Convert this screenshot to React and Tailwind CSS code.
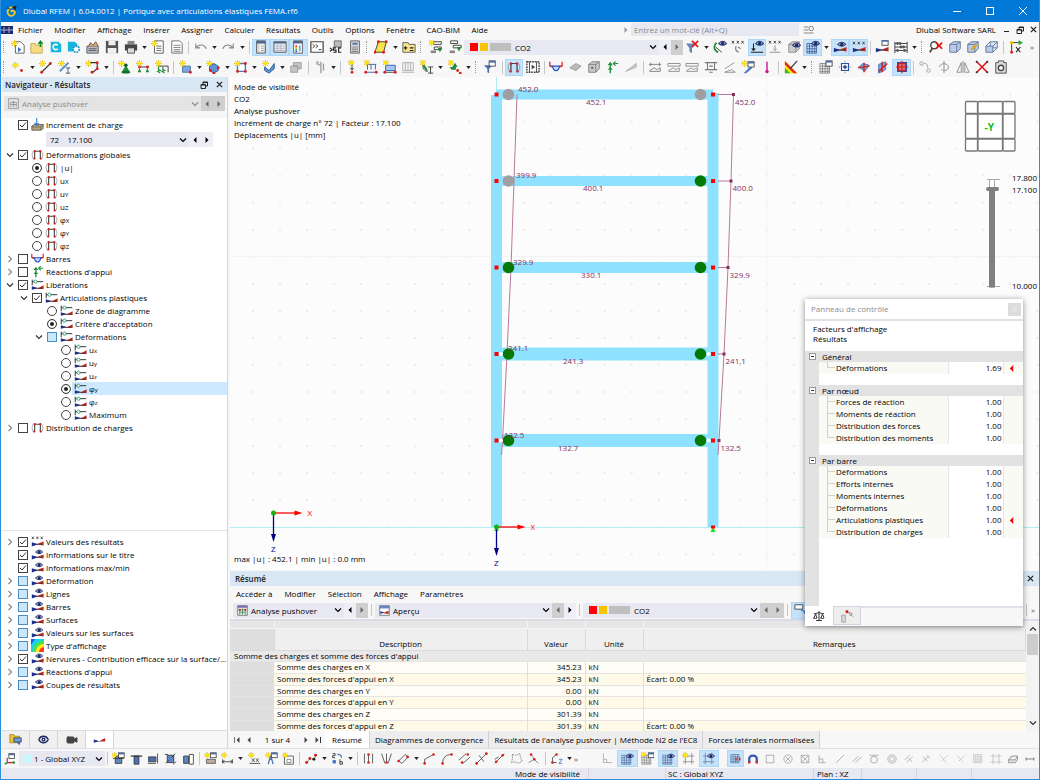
import { useState } from 'react';
import clsx from 'clsx';
import { LuEye, LuScale, LuVideo } from 'react-icons/lu';

/* ---------- icon fragments ---------- */

const Star = ({ x = 4, y = 4 }) => (
  <g transform={`translate(${x} ${y})`}>
    <path d="M0-4v8M-4 0h8M-2.8-2.8l5.6 5.6M2.8-2.8l-5.6 5.6" stroke="#c9a400" strokeWidth=".8" />
    <circle r="2.4" fill="#ffe40a" />
  </g>
);

const Dots = ({ at, r = 1.6, fill = '#d81e1e' }) => at.map(([x, y]) => <circle key={`${x}-${y}`} cx={x} cy={y} r={r} fill={fill} />);

const Eye = ({ x = 11, y = 4 }) => (
  <g transform={`translate(${x} ${y})`}>
    <path d="M-4.5 0Q0-5 4.5 0 0 4-4.5 0z" fill="#c8cfe6" stroke="#2c3c78" strokeWidth="1.2" />
    <circle r="2" fill="#1d2a63" />
  </g>
);

const Wedge = () => (
  <g>
    <path d="M1 14V9l8 2.5z" fill="#1c2f9a" />
    <path d="M15.500 8v5l-9-1.500z" fill="#b9281e" />
    <path d="M3 11.500h11" stroke="#333" strokeWidth=".8" />
  </g>
);

const Crosses = ({ y = 2 }) => (
  <path
    d={`M1 ${y}l2.4 3M3.4 ${y}l-2.4 3M6.6 ${y}l2.4 3M9 ${y}l-2.4 3M12 ${y}l2.4 3M14.4 ${y}l-2.4 3`}
    stroke="#333"
    strokeWidth="1"
  />
);

const Grid = ({ stroke = '#666', x = 1, y = 3 }) => (
  <path
    d={`M${x} ${y}h11v11h-11zM${x} ${y + 3}h11M${x} ${y + 6}h11M${x} ${y + 9}h11M${x + 3} ${y}v11M${x + 6} ${y}v11M${x + 9} ${y}v11`}
    fill="none"
    stroke={stroke}
    strokeWidth=".9"
  />
);

const Win = ({ fill = '#4e6fae', x = 8, y = 1 }) => (
  <g>
    <rect x={x} y={y} width="7" height="6" fill="#fff" stroke="#444" />
    <rect x={x} y={y} width="7" height="2" fill={fill} />
  </g>
);

const Cube = ({ fill = '#b9cdea', stroke = '#5b6f92' }) => (
  <path d="M2 5l4-3h8v8l-4 4H2zM2 5h8v9M10 5l4-3" fill={fill} stroke={stroke} />
);

const glyphs = {
  /* file */
  new: <><path d="M5 2h6l4 4v9H5z" fill="#fff" stroke="#555" /><path d="M8 8l4 3-4 3z" fill="#4477bb" /><Star /></>,
  open: <><path d="M1 4h5l1 2h7v9H1z" fill="#f4dd87" stroke="#c7a84a" /><path d="M12 8V2M9.5 4.500L12 1.500l2.500 3" stroke="#188a2a" strokeWidth="1.8" fill="none" /></>,
  cloud: <><path d="M2 2h9l3 3v9H2z" fill="#16b6dd" /><path d="M10 6a3 3 0 1 0 0 4" fill="none" stroke="#fff" strokeWidth="1.8" /></>,
  cloudGear: <><path d="M1 2h8l3 3v8H1z" fill="#16b6dd" /><circle cx="10.5" cy="10.5" r="3.5" fill="#fff" stroke="#2196c9" strokeWidth="2" strokeDasharray="2 1" /></>,
  box: <><path d="M1 7h13v8H1z" fill="#b5bcc8" stroke="#555" /><path d="M3 7l2-4 3 3 3-4 3 5" fill="#d8a878" stroke="#6a4a3a" /><path d="M3 10h9M3 12h9" stroke="#555" /></>,
  save: <><path d="M1 1h14v14H1z" fill="#555" /><path d="M4 1h8v5H4zM3 9h10v6H3z" fill="#eee" /></>,
  print: <><path d="M4 1h8v4H4z" fill="#888" /><path d="M1 5h14v7H1z" fill="#444" /><path d="M4 9h8v6H4z" fill="#ddd" stroke="#444" /></>,
  pageNew: <><path d="M4 1h10v14H4z" fill="#fff" stroke="#555" /><path d="M6 7h6M6 9.500h6M6 12h6" stroke="#666" /><Star /></>,
  page: <><path d="M2 1h9l3 3v11H2z" fill="#fff" stroke="#666" /><path d="M4 6h8M4 8.500h8M4 11h8M4 13h8" stroke="#777" /></>,
  undo: <path d="M2 4v5h5M2 9c4-5 10-4 12 1" fill="none" stroke="#888" strokeWidth="1.3" />,
  redo: <path d="M14 4v5H9M14 9C10 4 4 5 2 10" fill="none" stroke="#888" strokeWidth="1.3" />,
  navPane: <><path d="M3 1h10v14H3z" fill="#ddd" stroke="#555" /><path d="M3 1h10v3H3z" fill="#51668f" /><path d="M7 5h4v8H7z" fill="#fff" /><path d="M8 7h3M8 9.500h3M8 12h3" stroke="#888" /></>,
  tablePane: <><path d="M1 2h14v12H1z" fill="#e6e9f0" stroke="#555" /><path d="M1 2h14v2H1z" fill="#51668f" /><path d="M1 7h14M1 9.500h14M1 12h14M5 4v10M9 4v10" stroke="#aab" strokeWidth=".7" /></>,
  panel: <><path d="M3 1h10v14H3z" fill="#fff" stroke="#555" /><path d="M3 1h10v3H3z" fill="#51668f" /><path d="M5 6h2v2H5z" fill="#e33" /><path d="M5 8h2v2H5z" fill="#fb0" /><path d="M5 10h2v2H5z" fill="#3b3" /><path d="M5 12h2v2H5z" fill="#25e" /><path d="M9 6h2v7H9z" fill="#7aa7e8" /></>,
  console: <><path d="M1 2h14v12H1z" fill="#fff" stroke="#444" strokeWidth="1.4" /><path d="M3 5l2.500 2L3 9M6.500 5L9 7 6.500 9M10 11h3" fill="none" stroke="#222" /></>,
  script: <><path d="M6 1h8v7H6z" fill="#bbb" stroke="#666" /><path d="M1 9l2.500 2L1 13" fill="none" stroke="#222" strokeWidth="1.3" /><path d="M8 9H5v2.500h3V14H5M14 9h-3v5h3" fill="none" stroke="#222" strokeWidth="1.3" /></>,
  calc: <><path d="M3 1h10v14H3z" fill="#ddd" stroke="#555" /><path d="M5 3h6v2.500H5z" fill="#5b77ad" /><path d="M5 8h6M5 10.500h6M5 13h6" stroke="#555" strokeDasharray="1.5 .8" strokeWidth="1.4" /></>,
  surfY: <><path d="M5 2h9l-3 12H1z" fill="#f6e34c" stroke="#333" /><Dots at={[[5, 2], [14, 2], [11, 14], [1, 14]]} /></>,
  calcY: <><path d="M1 3h6l1 2h7v9H1z" fill="#f6e58d" stroke="#555" /><path d="M4 7v4M2 9h4M9 9h4M9 12h4" stroke="#222" strokeWidth="1.3" /></>,
  loadNew: <><path d="M5 2h9v3H5zM6 8h8v3H6z" fill="#fff" stroke="#333" /><path d="M10 9h5l-2.500 5z" fill="#1b8a2b" /><path d="M2 12h6v3H2z" fill="#888" /><Star x={3} y={3} /></>,
  loadEdit: <><path d="M3 1h8v3H3zM6 6h9v3H6z" fill="#fff" stroke="#333" /><path d="M10 8h5l-2.500 5z" fill="#1b8a2b" /><path d="M2 12h6v3H2z" fill="#888" /></>,
  filterX: <><path d="M1 4h11l-4 5v6l-3-2V9z" fill="#6b86bd" /><path d="M8 1l7 7M15 1L8 8" stroke="#e01515" strokeWidth="2" /></>,
  greenEye: <><path d="M4 3c-4 4-3 9 2 11" fill="none" stroke="#238a3c" strokeWidth="2" /><path d="M3 8l7 6" stroke="#333" /><Eye /></>,
  xxxGray: <><Crosses y={1} /><path d="M6 7c-2 3 0 6 3 7M8 8l3 2" fill="none" stroke="#888" strokeWidth="1.5" /></>,
  loadEye: <><path d="M4 4v8M2 9.500L4 12l2-2.500M1 14h14" fill="none" stroke="#222" strokeWidth="1.2" /><Eye /></>,
  xxxLoad: <><Crosses y={1} /><path d="M8 6v6M6 10l2 2 2-2M2 14h12" fill="none" stroke="#888" /></>,
  cubeEye: <><Cube fill="#ccc" stroke="#888" /><Eye y={6} /></>,
  gridEye: <><Grid stroke="#3d5c94" y={4} /><Eye x={11} y={4} /></>,
  wedgeEye: <><Wedge /><Eye x={10} y={5} /></>,
  wedgeXxx: <><Wedge /><Crosses y={2} /></>,
  wedge: <><path d="M1 12V8l7 2z" fill="#1c2f9a" /><path d="M15 6v4.500H7z" fill="#b9281e" /></>,
  wedgeWin: <><Wedge /><Win x={8} y={0} /></>,
  abacus: <><path d="M1 2v13M15 2v13M1 4h14M1 8h14M1 12h14" stroke="#333" /><Dots at={[[4, 4], [7, 4], [11, 8], [8, 8], [4, 12], [12, 12]]} fill="#555" /></>,
  zoomX: <><circle cx="6" cy="6" r="4" fill="none" stroke="#444" strokeWidth="1.5" /><path d="M4 9l-3 5" stroke="#444" strokeWidth="2" /><path d="M8 3l7 7M15 3l-7 7" stroke="#e01515" strokeWidth="2" /></>,
  cube: <Cube />,
  cubePen: <><Cube /><path d="M6 11l6-6" stroke="#e0a020" strokeWidth="2.5" /></>,
  cubes: <><path d="M6 2h8v7H6z" fill="#dde6f5" stroke="#5b6f92" /><path d="M1 7h8v7H1zM1 7l5-5M9 7l5-5M9 14l5-5" fill="#b9cdea" stroke="#5b6f92" /></>,
  axes: <><path d="M3 14V3h10" fill="none" stroke="#222" /><path d="M11 0l5 3-5 3z" fill="#1fae2e" /><path d="M8 8l5 6M13 8l-5 6" stroke="#222" strokeWidth="1.3" /><Dots at={[[3, 3]]} fill="#e8c000" r={2} /><Dots at={[[3, 14]]} /></>,
  /* model */
  node: <><Star x={5} y={6} /><Dots at={[[12, 12]]} /></>,
  line: <><path d="M3 14L13 4" stroke="#333" strokeWidth="1.3" /><Dots at={[[3, 14], [13, 4]]} /><Star /></>,
  member: <><path d="M2 13L12 3" stroke="#5a86c8" strokeWidth="2" /><path d="M9 9h5M11.500 9v6M9 15h5" stroke="#678" strokeWidth="1.3" /><Star /></>,
  poly: <><path d="M6 3h8v7l-5 4" fill="none" stroke="#333" strokeWidth="1.3" /><Dots at={[[14, 3], [14, 10], [8, 14]]} /><Star /></>,
  cone: <><path d="M9 6l5 8H4z" fill="#1e8c3a" /><ellipse cx="9" cy="14" rx="5" ry="1.5" fill="#146b2a" /><Dots at={[[9, 6]]} fill="#145a24" r={2} /><Star /></>,
  supports: <><path d="M3 8h12" stroke="#333" /><path d="M4 9l2 5H2zM13 9l2 5h-4z" fill="#1e8c3a" /><Dots at={[[4, 8], [13, 8]]} /><Star /></>,
  springs: <><path d="M3 7h12v7" fill="none" stroke="#333" /><path d="M4 8v3l2 1-3 1 3 2M9 8v3l2 1-3 1 3 2" fill="none" stroke="#1e8c3a" strokeWidth="1.3" /><Star /></>,
  surface: <><path d="M4 7h9v7H4z" fill="#7ea6dc" stroke="#4a6fa5" /><Dots at={[[13, 14]]} /><Star /></>,
  solid: <><path d="M4 7l5-3 5 3v5l-5 3-5-3z" fill="#5f93d6" stroke="#2c558f" /><Dots at={[[14, 9], [9, 15], [5, 12]]} /><Star /></>,
  opening: <><path d="M4 4h9v9H4z" fill="#fff" stroke="#4a77b8" strokeWidth="1.6" /><Dots at={[[13, 4], [13, 13], [4, 13]]} /><Star /></>,
  prism: <><path d="M3 8l5 4 6-8v6l-6 5-5-3z" fill="#5f93d6" stroke="#2c558f" /><Star /></>,
  blocks: <path d="M2 7h8v7H2zM5 3h9v7h-4V7H5z" fill="#c4c4c4" stroke="#999" />,
  grayCol: <><path d="M9 2v13M12 4v8M4 4l4 2" stroke="#999" strokeWidth="1.5" /><circle cx="5" cy="3" r="2" fill="#bbb" /></>,
  pinLoad: <><path d="M8 4v7M6 9l2 2.500L10 9" stroke="#333" fill="none" /><Dots at={[[8, 14]]} /><Star x={7} y={3} /></>,
  lineLoad: <><path d="M3 5h11M4 5v6M8 5v6M13 5v6M2 14h13" stroke="#2f5da8" fill="none" /><Dots at={[[2, 14], [14, 14]]} /><Star x={3} y={3} /></>,
  surfLoad: <><path d="M3 6h11v6H3z" fill="#a9c6ee" stroke="#2f5da8" /><path d="M2 14h13" stroke="#333" /><Dots at={[[2, 14], [14, 14]]} /><Star x={3} y={3} /></>,
  grayLoad: <path d="M2 3h12v9H2zM5 3v9M8 3v9M11 3v9M1 14h14" fill="none" stroke="#aaa" />,
  nodeI: <><path d="M3 4c0 6 2 9 6 9M9 8h6M12 8v7M9 15h6" fill="none" stroke="#333" /><path d="M4 6l4 6" stroke="#1e8c3a" strokeWidth="2.5" /><Star x={3} y={3} /></>,
  greenArrow: <><path d="M2 8h3l3-5 3 5h-2v3H4z" fill="#1e8c3a" /><Dots at={[[11, 12], [14, 15]]} /><Star x={3} y={3} /></>,
  filterWin: <><path d="M1 6h10l-4 4v5l-2-1v-4z" fill="#4b6fb3" /><Win x={7} y={1} /></>,
  frame: <><path d="M4.500 13V4h7v9" fill="none" stroke="#444" strokeWidth="1.4" /><path d="M2.500 4Q0 8 2.500 13M13.500 4q2.500 4 0 9" fill="none" stroke="#888" strokeWidth=".8" /><Dots at={[[4.5, 4], [11.5, 4], [4, 13], [12, 13]]} fill="#c42626" r={1.4} /></>,
  film: <><path d="M1 2h14v12H1z" fill="none" stroke="#444" strokeWidth="1.6" strokeDasharray="2 1" /><path d="M4 2v12M12 2v12" stroke="#444" /><path d="M6.500 5.500l4 2.500-4 2.500z" fill="#444" /></>,
  moment: <><path d="M1 2v5l3 1M15 2v5l-3 1M1 7h3M12 7h3" fill="none" stroke="#d02020" strokeWidth="1.4" /><path d="M4 7c1 7 7 7 8 0z" fill="#c8d8f8" stroke="#2a4fc0" strokeWidth="1.3" /></>,
  plate: <path d="M2 9l7-5 6 3-6 5z" fill="#bbb" stroke="#999" />,
  cubeGray: <><Cube fill="#ccc" stroke="#777" /><Dots at={[[6, 9]]} fill="#777" /></>,
  reaction: <><path d="M6 15v-4M6 9V5" stroke="#1e8c3a" strokeWidth="1.6" /><path d="M3 6l3-4 3 4zM3 11l3-3 3 3z" fill="#1e8c3a" /><path d="M15 4h-4M12 1.500L9.500 4 12 6.500" fill="none" stroke="#1e8c3a" strokeWidth="1.4" /></>,
  wing: <path d="M2 13L14 4v4z" fill="#ccc" stroke="#aaa" />,
  sec1: <path d="M1 5h14M3 3v4M13 3v4M2 12l5-3 3 2 4-2v4H2z" fill="none" stroke="#777" />,
  sec2: <path d="M1 4h14v3H1zM2 12l5-3 3 2 4-2v4H2z" fill="none" stroke="#888" />,
  sec3: <path d="M1 3h14M4 3v8M12 3v8M1 11h14M6 14h4M6 7h4" fill="none" stroke="#777" strokeWidth="1.2" />,
  sec4: <path d="M2 10L13 3M2 14h12l-4-3z" fill="none" stroke="#888" />,
  resWin: <><path d="M3 15l8-8 2 2-7 6z" fill="#4b78c8" /><Win x={8} y={2} /><Star x={4} y={4} /></>,
  pin: <><path d="M8 2v10" stroke="#d0149a" strokeWidth="1.6" /><Dots at={[[8, 13]]} fill="#d0149a" r={2} /></>,
  rainbow: <><path d="M1 1v14h14z" fill="#ffe100" /><path d="M1 1l14 14h-4L1 5z" fill="#e02a1a" /><path d="M1 9l6 6H1z" fill="#2ab83a" /><path d="M15 1L7 10" stroke="#444" strokeWidth="1.5" /></>,
  gridWin: <><Grid stroke="#777" y={4} /><Win x={8} y={1} /></>,
  snap: <><path d="M8 1v14M1 8h14" stroke="#777" strokeDasharray="1.5 1" /><path d="M4 4h8v8H4z" fill="none" stroke="#2a4fa0" strokeWidth="1.3" /><Dots at={[[8, 8]]} fill="#2a4fa0" r={2} /></>,
  planeA: <><path d="M2 8l5-4 7 2-5 7z" fill="#7da5de" stroke="#4b6fb3" /><path d="M1 9l13-2M8 3v11" stroke="#d02020" strokeWidth="1.6" /></>,
  planeB: <><path d="M3 5l8-3v9l-8 4z" fill="#7da5de" stroke="#4b6fb3" /><path d="M3 13L13 4M7 2v12" stroke="#d02020" strokeWidth="1.6" /></>,
  planeC: <><path d="M3 3h10v10H3z" fill="#d87080" stroke="#2a4fa0" strokeWidth="1.4" /><path d="M1 8h14M8 1v14M4 4h8v8H4z" fill="none" stroke="#d02020" strokeWidth="1.4" /></>,
  dupl: <><circle cx="4" cy="4" r="2" fill="none" stroke="#999" /><circle cx="12" cy="12" r="2" fill="none" stroke="#999" /><path d="M7 4c4 0 4 2 4 5" fill="none" stroke="#999" /></>,
  rot: <path d="M8 1v14M3 8c0-5 10-5 10 0s-5 4-8 3" fill="none" stroke="#888" />,
  mirror: <path d="M8 1v14M6 3v11H1zM10 3v11h5z" fill="none" stroke="#888" />,
  cross: <><path d="M2 2l12 12M14 2L2 14" stroke="#e01515" strokeWidth="1.800" /><Dots at={[[2, 2], [14, 2], [2, 14], [14, 14]]} fill="#333" r={1.2} /></>,
  camera: <><path d="M2 3h3V1h6v2h3v12H2z" fill="#ddd" stroke="#444" /><circle cx="8" cy="9" r="3" fill="#fff" stroke="#444" strokeWidth="1.5" /></>,
  /* tree */
  hinge: <><path d="M1.500 2v7M1.500 4.500H15" stroke="#333" strokeWidth="1.2" /><circle cx="5.5" cy="4.5" r="2" fill="#e5fff5" stroke="#2a9070" /><path d="M1 14.500V10l8 2.500z" fill="#1c2f9a" /><path d="M15.500 9v4.500H7z" fill="#b9281e" /><path d="M2 12.500h12" stroke="#333" strokeWidth=".8" /></>,
  increment: <><path d="M1 10l3-2h11v5l-3 2H1z" fill="#b7a47a" stroke="#555" /><path d="M1 11h11v4M12 11l3-3" fill="none" stroke="#555" strokeWidth=".8" /><path d="M7 0v8M4.500 6L7 9l2.500-3" fill="none" stroke="#2f78c8" strokeWidth="1.3" /></>,
  pushover: <><path d="M1 1h14v14H1z" fill="#ececec" stroke="#777" /><path d="M4 13V6h8v7M4 9.500h8M8 4v9" fill="none" stroke="#777" /></>,
  pushoverC: <><path d="M1 1h14v14H1z" fill="#e8efe2" stroke="#555" /><path d="M1 1h14v3H1z" fill="#7a6fb0" /><path d="M4 14V7h8v7M4 10.500h8M8 5v9" fill="none" stroke="#2a7a4a" /><Dots at={[[4, 7], [12, 7]]} /></>,
  overview: <><path d="M1 1h14v14H1z" fill="#fff" stroke="#555" /><path d="M1 1h14v4H1z" fill="#6a86bd" /><path d="M2 13V9l6 2z" fill="#1c2f9a" /><path d="M14 8v5l-8-1z" fill="#b9281e" /></>,
  contour: <><path d="M0 0h16v16H0z" fill="#19d3e8" /><path d="M2 16A14 14 0 0 1 16 2v14z" fill="#4be04b" /><path d="M6 16A10 10 0 0 1 16 6v10z" fill="#ffe81a" /><path d="M10 16a6 6 0 0 1 6-6v6z" fill="#ff3a1a" /><path d="M0 0h5L0 7z" fill="#2257e8" /></>,
  modelTab: <><path d="M1 2h5l1 2h6v8H1z" fill="#f2c230" stroke="#a8841c" /><path d="M6 6h9v5H6z" fill="#6f9de0" stroke="#345" /><path d="M9 11l4 4 1-4z" fill="#3b6cc0" /></>,
  magnifierList: <><path d="M1 4h6M1 8h6M1 12h13" stroke="#777" strokeWidth="1.2" /><circle cx="11" cy="6" r="3" fill="none" stroke="#777" strokeWidth="1.2" /></>,
  /* bottom bar */
  cs: <><path d="M4 13V7M4 13h7" stroke="#d02020" strokeWidth="1.4" /><path d="M4 13l-3 2" stroke="#1e8c3a" strokeWidth="2" /><Win x={6} y={2} /><Dots at={[[12, 13]]} fill="#1e8c3a" /></>,
  viewA: <><path d="M4 5h8v9H4z" fill="#5d84c4" stroke="#333" /><path d="M1 8h14" stroke="#333" /><Win x={8} y={1} /><Star x={3} y={4} /></>,
  viewB: <><path d="M5 5h6v10H5z" fill="#4b6fb3" stroke="#333" /><path d="M1 5h14" stroke="#333" strokeWidth="1.5" /></>,
  viewC: <><path d="M2 6h9v6H2z" fill="#4b6fb3" stroke="#333" /><path d="M13 2v12M1 14h10" stroke="#333" /></>,
  viewD: <><path d="M4 4h8v9H4z" fill="#5d84c4" stroke="#333" /><path d="M1 3h4M15 12l-4 3M2 14l4-4M10 6l4-4" stroke="#333" /></>,
  viewE: <><path d="M2 5h6v9H2z" fill="#5d84c4" stroke="#333" /><path d="M9 3h5v12H9z" fill="#fff" stroke="#333" /></>,
  secNew: <><path d="M3 9h11v5H3z" fill="#b9b09a" stroke="#555" /><Win x={8} y={1} /><Star /></>,
  dimNew: <><path d="M2 9v5M14 9v5M2 12h12M4 10l-2 2 2 2M12 10l2 2-2 2" fill="none" stroke="#333" /><Star /></>,
  xxNew: <><path d="M5 8l3 4M8 8l-3 4M10 8l3 4M13 8l-3 4M2 14h13" stroke="#333" fill="none" /><Star /></>,
  towerNew: <><path d="M7 4l-3 11M7 4l3 11M5 9h4" fill="none" stroke="#4b6fb3" strokeWidth="1.5" /><Win x={8} y={1} /><Star /></>,
  boxNew: <><path d="M3 5h11v10H3z" fill="#fff" stroke="#444" /><path d="M6 9h5v4H6z" fill="none" stroke="#777" /><Star /></>,
  pathDots: <><path d="M2 13l4-5 5 1 3-6" fill="none" stroke="#333" strokeDasharray="2 1" /><Dots at={[[2, 13], [6, 8], [13, 4]]} r={1.8} /><Dots at={[[11, 9]]} fill="#222" r={1.8} /></>,
  renum: <><path d="M2 2h3v2.500H2V7h3M11 9v6h3v-3h-3" fill="none" stroke="#222" /><path d="M2 10h4v4H2z" fill="#3b72c8" /><path d="M8 3c4 0 5 2 5 4" fill="none" stroke="#3b72c8" strokeWidth="1.4" /></>,
  colA: <><path d="M3 2v12M13 2v12M8 3v10" stroke="#444" /><Dots at={[[8, 3], [8, 13]]} /></>,
  colB: <><path d="M2 2l4 12M14 2l-4 12M8 2v11" stroke="#444" /><Dots at={[[8, 13]]} /></>,
  rectD: <><path d="M2 11l8-8 4 3-8 8z" fill="none" stroke="#444" /><Dots at={[[2, 11], [13, 6]]} /></>,
  lineD: <><path d="M2 14V9l11-6" fill="none" stroke="#444" /><Dots at={[[2, 14], [13, 3]]} /></>,
  arcD: <><path d="M2 14C2 7 6 3 13 3" fill="none" stroke="#444" /><Dots at={[[2, 14], [13, 3]]} /></>,
  parD: <><path d="M1 10l9-8M6 14l9-8" stroke="#444" /><Dots at={[[5, 13], [12, 3]]} /></>,
  trimD: <><path d="M2 14L14 2M5 4l6 8" stroke="#444" /><Dots at={[[2, 14], [14, 2]]} /></>,
  joinD: <><path d="M2 14L14 2M2 9l5-3" stroke="#444" /><Dots at={[[4, 12], [12, 4]]} /></>,
  gearD: <path d="M3 3l4 1 5-2 1 5 2 4-5 3-4-2-4 1 1-5z" fill="none" stroke="#777" strokeDasharray="2 1" />,
  angleD: <><path d="M2 13l7-4L5 3M9 9l5 5" fill="none" stroke="#777" /><Dots at={[[5, 3], [9, 9]]} /></>,
  pentaD: <><path d="M8 3L3 7v6h5" fill="none" stroke="#444" /><path d="M11 9h4l-4 5h4" fill="none" stroke="#3b72c8" /><Dots at={[[8, 3], [3, 13]]} /></>,
  corner: <path d="M3 2v11h11M3 9h4v4" fill="none" stroke="#aaa" />,
  gridOn: <><Grid stroke="#54729f" y={4} /><Eye x={11} y={5} /></>,
  gridNew: <><Grid stroke="#888" y={4} /><Win x={9} y={1} /><Star x={3} y={3} /></>,
  frameNew: <><path d="M4 1v14M12 1v14M1 5h14M1 12h14" stroke="#888" fill="none" /><Star /></>,
  frameEye: <><path d="M4 1v14M12 1v14M1 5h14M1 12h14" stroke="#667fa5" fill="none" /><Eye x={11} y={5} /></>,
  snapGrid: <><Grid stroke="#54729f" y={2} /><path d="M8 6v4M13 6v4" stroke="#c33" strokeWidth="2" /></>,
  magnet: <><path d="M3 13V8c0-6 10-6 10 0v5" fill="none" stroke="#3a57b0" strokeWidth="3" /><path d="M1.500 11h3v3h-3zM11.500 11h3v3h-3z" fill="#e02020" /></>,
  sq: <path d="M3 3h10v10H3z" fill="none" stroke="#999" />,
  circX: <><circle cx="8" cy="8" r="5.5" fill="none" stroke="#999" /><path d="M5 5l6 6M11 5l-6 6" stroke="#999" /></>,
  sqX: <path d="M3 3h10v10H3zM3 3l10 10M13 3L3 13" fill="none" stroke="#999" />,
  perp: <path d="M4 3v10h9M4 8h5v5" fill="none" stroke="#999" />,
  diag: <path d="M3 13L13 3" stroke="#999" />,
  par: <path d="M2 12l8-8M6 13l8-8" stroke="#999" />,
  tangent: <><circle cx="8" cy="9" r="4.5" fill="none" stroke="#999" /><path d="M2 3h12" stroke="#999" /></>,
  ring: <><circle cx="8" cy="8" r="5.5" fill="none" stroke="#999" /><circle cx="8" cy="8" r="3" fill="none" stroke="#aaa" /></>,
  hatchA: <path d="M2 9l7-6M5 12l8-7M8 7l4 5" stroke="#aaa" fill="none" />,
  hatchB: <path d="M3 12l9-8M4 5l6 6M9 3l4 4" stroke="#aaa" fill="none" />,
  hatchC: <path d="M3 3l8 10M13 3L5 11" stroke="#aaa" strokeDasharray="2 1" fill="none" />,
  gridOff: <Grid stroke="#c4c4c4" x={2} y={2} />,
  frameOff: <path d="M4 1v14M12 1v14M1 4h14M1 12h14" stroke="#bbb" fill="none" />,
  slab: <path d="M2 9l4-5h8l-3 5zM2 9v4h9l3-4V4" fill="#ddd" stroke="#888" />,
  dash: <path d="M2 8h12M3 6v4M13 6v4" stroke="#888" strokeWidth="1.5" />,
  selWin: <><path d="M1 2h9v5H1z" fill="#fff" stroke="#444" /><path d="M8 8l6 2-2 1 2 3" fill="none" stroke="#2f6fc0" strokeWidth="1.5" /></>,
  memberPick: <><path d="M2 7h4v8H2z" fill="#ddd" stroke="#999" /><Dots at={[[8, 3]]} r={1.8} /><path d="M10 4l4 1-2 3zM13 7l2 2" fill="none" stroke="#888" /></>,
};

function Icon({ name, className = 'size-[14px]' }) {
  return (
    <svg viewBox="0 0 16 16" className={clsx('shrink-0', className)} aria-hidden="true">
      {glyphs[name]}
    </svg>
  );
}

const Chevron = ({ className }) => (
  <svg viewBox="0 0 8 8" className={clsx('size-[8px] shrink-0', className)} aria-hidden="true">
    <path d="M1 2.500l3 3 3-3" fill="none" stroke="currentColor" strokeWidth="1.2" />
  </svg>
);

const Tri = ({ left, className }) => (
  <svg viewBox="0 0 6 6" className={clsx('size-[6px]', className)} aria-hidden="true">
    <path d={left ? 'M4.500 0v6l-3-3z' : 'M1.500 0v6l3-3z'} fill="currentColor" />
  </svg>
);

const CloseMark = ({ className = 'text-[#222]' }) => (
  <svg viewBox="0 0 8 8" className={clsx('size-[7px]', className)} aria-hidden="true">
    <path d="M1 1l6 6M7 1L1 7" stroke="currentColor" strokeWidth="1.5" />
  </svg>
);

const RestoreButton = () => (
  <button aria-label="Restaurer">
    <svg viewBox="0 0 8 8" className="size-[8px]"><path d="M1 3.500h4.500v4H1zM3 3.500V1h4.500v4H5.500M1 4h4.500M3 1.500h4.500" fill="none" stroke="#222" /></svg>
  </button>
);

/* ---------- toolbar parts ---------- */

// items: glyph names; "*" marks an active button, "v" a menu arrow, "|" a divider
function ToolGroup({ items, className, iconClass }) {
  return (
    <div className={clsx('flex h-[17px] shrink-0 items-stretch', className)}>
      {items.split(' ').map((item, i) => {
        if (item === '|') {
          return <span key={i} className="mx-0.5 my-0.5 w-px shrink-0 bg-[#c6c6c6]" />;
        }
        if (item === 'v') {
          return (
            <button key={i} className="flex w-[9px] shrink-0 items-center justify-center" aria-label="Plus">
              <svg viewBox="0 0 6 4" className="h-[3px] w-[5px]"><path d="M0 0h6L3 4z" fill="#222" /></svg>
            </button>
          );
        }
        const active = item.startsWith('*');
        const name = active ? item.slice(1) : item;
        return (
          <button
            key={i}
            aria-label={name}
            className={clsx('flex min-w-0 flex-1 items-center justify-center', active ? 'bg-[#c4e2fa] outline-1 -outline-offset-1 outline-[#b0d6f5]' : 'hover:bg-[#e3f0fb]')}
          >
            <Icon name={name} className={iconClass} />
          </button>
        );
      })}
    </div>
  );
}

const Grip = () => <span className="mx-0.5 h-3 w-1 shrink-0 border-l border-dotted border-[#999]" />;

const Divider = () => <span className="mx-[3px] h-3 w-px shrink-0 bg-[#c6c6c6]" />;

function Combo({ label, value, icon, lead, disabled, className }) {
  return (
    <div className={clsx('relative flex h-[15px] min-w-0 items-center pl-1', disabled ? 'bg-[#e4e4e4] text-[#8a8a8a]' : 'bg-[#e8e8f3]', className)}>
      {icon && <Icon name={icon} className="mr-[3px] size-[11px]" />}
      {lead}
      <select aria-label={label} className="h-full min-w-0 flex-1 appearance-none bg-transparent pr-3 leading-[15px] outline-none" disabled={disabled}>
        <option>{value}</option>
      </select>
      <Chevron className="pointer-events-none absolute right-0.5" />
    </div>
  );
}

function Stepper({ dimLeft, dimRight }) {
  return (
    <div className="flex h-[15px] shrink-0">
      <button aria-label="Précédent" className={clsx('flex w-[12px] items-center justify-center', dimLeft ? 'bg-[#cfcfcf] text-[#666]' : 'bg-[#eeeef6]')}><Tri left /></button>
      <button aria-label="Suivant" className={clsx('flex w-[12px] items-center justify-center', dimRight ? 'bg-[#cfcfcf] text-[#666]' : 'bg-[#eeeef6]')}><Tri /></button>
    </div>
  );
}

const LoadSwatches = () => (
  <span className="ml-0.5 mr-1 flex gap-0.5">
    <span className="size-2 bg-[#fe0000]" />
    <span className="size-2 bg-[#f8c300]" />
    <span className="h-2 w-[21px] bg-[#bfbfbf]" />
  </span>
);

/* ---------- navigator ---------- */

const INDENT = ['pl-0.5', 'pl-4', 'pl-[31px]', 'pl-[45px]'];

const resultTree = [
  { lv: 0, kind: 'check', on: true, open: true, icon: 'frame', text: 'Déformations globales' },
  { lv: 1, kind: 'radio', group: 'disp', on: true, icon: 'frame', text: '|u|' },
  { lv: 1, kind: 'radio', group: 'disp', icon: 'frame', text: 'u', sub: 'X' },
  { lv: 1, kind: 'radio', group: 'disp', icon: 'frame', text: 'u', sub: 'Y' },
  { lv: 1, kind: 'radio', group: 'disp', icon: 'frame', text: 'u', sub: 'Z' },
  { lv: 1, kind: 'radio', group: 'disp', icon: 'frame', text: 'φ', sub: 'X' },
  { lv: 1, kind: 'radio', group: 'disp', icon: 'frame', text: 'φ', sub: 'Y' },
  { lv: 1, kind: 'radio', group: 'disp', icon: 'frame', text: 'φ', sub: 'Z' },
  { lv: 0, kind: 'check', open: false, icon: 'moment', text: 'Barres' },
  { lv: 0, kind: 'check', open: false, icon: 'reaction', text: "Réactions d'appui" },
  { lv: 0, kind: 'check', on: true, open: true, icon: 'hinge', text: 'Libérations' },
  { lv: 1, kind: 'check', on: true, open: true, icon: 'hinge', text: 'Articulations plastiques' },
  { lv: 2, kind: 'radio', group: 'hinge', icon: 'hinge', text: 'Zone de diagramme' },
  { lv: 2, kind: 'radio', group: 'hinge', on: true, icon: 'hinge', text: "Critère d'acceptation" },
  { lv: 2, kind: 'check', blue: true, open: true, icon: 'hinge', text: 'Déformations' },
  { lv: 3, kind: 'radio', group: 'def', icon: 'hinge', text: 'u', sub: 'x' },
  { lv: 3, kind: 'radio', group: 'def', icon: 'hinge', text: 'u', sub: 'y' },
  { lv: 3, kind: 'radio', group: 'def', icon: 'hinge', text: 'u', sub: 'z' },
  { lv: 3, kind: 'radio', group: 'def', on: true, selected: true, icon: 'hinge', text: 'φ', sub: 'y' },
  { lv: 3, kind: 'radio', group: 'def', icon: 'hinge', text: 'φ', sub: 'z' },
  { lv: 3, kind: 'radio', group: 'def', icon: 'hinge', text: 'Maximum' },
  { lv: 0, kind: 'check', open: false, icon: 'frame', text: 'Distribution de charges' },
];

const displayTree = [
  { lv: 0, kind: 'check', on: true, open: false, icon: 'wedgeXxx', text: 'Valeurs des résultats' },
  { lv: 0, kind: 'check', on: true, icon: 'wedgeEye', text: 'Informations sur le titre' },
  { lv: 0, kind: 'check', on: true, icon: 'wedgeEye', text: 'Informations max/min' },
  { lv: 0, kind: 'check', blue: true, open: false, icon: 'wedgeEye', text: 'Déformation' },
  { lv: 0, kind: 'check', blue: true, open: false, icon: 'wedgeEye', text: 'Lignes' },
  { lv: 0, kind: 'check', blue: true, open: false, icon: 'wedgeEye', text: 'Barres' },
  { lv: 0, kind: 'check', blue: true, open: false, icon: 'wedgeEye', text: 'Surfaces' },
  { lv: 0, kind: 'check', blue: true, open: false, icon: 'wedgeEye', text: 'Valeurs sur les surfaces' },
  { lv: 0, kind: 'check', blue: true, open: false, icon: 'contour', text: "Type d'affichage" },
  { lv: 0, kind: 'check', on: true, open: false, icon: 'wedgeEye', text: 'Nervures - Contribution efficace sur la surface/...' },
  { lv: 0, kind: 'check', blue: true, open: false, icon: 'wedgeEye', text: "Réactions d'appui" },
  { lv: 0, kind: 'check', blue: true, open: false, icon: 'wedgeEye', text: 'Coupes de résultats' },
];

function TreeRow({ lv, kind, group, on, blue, open, icon, text, sub, selected }) {
  return (
    <li className={clsx('flex h-[13px] items-center', INDENT[lv])}>
      <span className="flex w-[14px] shrink-0 items-center pl-0.5 text-[#333]">
        {open !== undefined && <Chevron className={open ? '' : '-rotate-90 text-[#888]'} />}
      </span>
      <label className="flex h-full min-w-0 flex-1 items-center">
        {kind === 'radio' ? (
          <input
            type="radio"
            name={group}
            defaultChecked={on}
            className="size-[10px] shrink-0 appearance-none rounded-full border border-[#444] bg-white checked:bg-[#222] checked:shadow-[inset_0_0_0_2px_white]"
          />
        ) : (
          <span className="grid shrink-0">
            <input
              type="checkbox"
              defaultChecked={on}
              className={clsx('peer size-[10px] appearance-none border [grid-area:1/1]', blue ? 'border-[#4a8cc4] bg-[#cce6fa]' : 'border-[#444] bg-white')}
            />
            <svg viewBox="0 0 10 10" className="pointer-events-none invisible size-[10px] [grid-area:1/1] peer-checked:visible">
              <path d="M2 5l2 2 4-4.500" fill="none" stroke="#333" />
            </svg>
          </span>
        )}
        <span className={clsx('ml-px flex h-full min-w-0 flex-1 items-center pl-0.5', selected && 'bg-[#cde8ff]')}>
          <Icon name={icon} className="mr-0.5 size-[13px]" />
          <span className="whitespace-nowrap">
            {text}
            {sub && <sub className="bottom-0 text-[6px]">{sub}</sub>}
          </span>
        </span>
      </label>
    </li>
  );
}

function Navigator() {
  const [tab, setTab] = useState(3);
  const tabs = [
    <Icon key="m" name="modelTab" className="size-[13px]" />,
    <LuEye key="e" className="size-[11px] text-[#1d2a63]" strokeWidth={3} />,
    <LuVideo key="v" className="size-[12px] fill-[#444] text-[#444]" />,
    <Icon key="w" name="wedge" className="size-[13px]" />,
  ];

  return (
    <aside className="ml-px flex w-[226px] shrink-0 flex-col border-r border-[#d4d4dc] bg-white">
      <div className="flex h-[15px] items-center bg-[#d9e7f4] pl-[3px] pr-1">
        <h2 className="flex-1 font-semibold text-[#222]">Navigateur - Résultats</h2>
        <RestoreButton />
        <button aria-label="Fermer" className="ml-2"><CloseMark /></button>
      </div>
      <div className="flex bg-[#f6f6f6] px-0.5 pb-[7px] pt-1">
        <Combo label="Analyse" value="Analyse pushover" icon="pushover" disabled className="flex-1" />
        <Stepper dimLeft dimRight />
      </div>
      <div className="flex-1">
        <ul>
          <TreeRow lv={0} kind="check" on icon="increment" text="Incrément de charge" />
          <li className="mb-px flex pl-[44px] pr-[14px] pt-px">
            <Combo label="Incrément" value={'72\u00a0\u00a0\u00a0\u00a017.100'} className="flex-1" />
            <Stepper />
          </li>
          {resultTree.map((row, i) => <TreeRow key={i} {...row} />)}
        </ul>
      </div>
      <ul className="h-[200px] border-t border-[#e4e4e4] pt-[4px]">
        {displayTree.map((row) => <TreeRow key={row.text} {...row} />)}
      </ul>
      <div className="flex h-[18px] border-t border-[#dcdce4] bg-[#f7f7f7]">
        {tabs.map((icon, i) => (
          <button
            key={i}
            aria-label={`Onglet ${i + 1}`}
            onClick={() => setTab(i)}
            className={clsx('flex w-[28px] items-center justify-center border-r border-[#d4d4e0]', tab === i ? 'bg-white' : 'bg-[#f0f0f0]')}
          >
            {icon}
          </button>
        ))}
      </div>
    </aside>
  );
}

/* ---------- model view ---------- */

const LEVELS = [
  { y: 94.5, h: 10, left: 517, right: 733.5, marks: ['#a09ea3', '#a09ea3'], labels: ['452.0', '452.1', '452.0'], mid: 586, lx: 518 },
  { y: 181, h: 10, left: 514, right: 731, marks: ['#a09ea3', '#047a04'], labels: ['399.9', '400.1', '400.0'], mid: 583, lx: 516 },
  { y: 267.5, h: 11, left: 511, right: 728, marks: ['#047a04', '#047a04'], labels: ['329.9', '330.1', '329.9'], mid: 581, lx: 513 },
  { y: 354, h: 13, left: 507, right: 724, marks: ['#047a04', '#047a04'], labels: ['241.1', '241.3', '241.1'], mid: 563, lx: 508, hinge: true },
  { y: 440.5, h: 13, left: 502.5, right: 719, marks: ['#047a04', '#047a04'], labels: ['132.5', '132.7', '132.5'], mid: 558, lx: 504, hinge: true },
];

function Axes({ x, y }) {
  return (
    <g>
      <path d={`M${x} ${y}h22`} stroke="#f00" strokeWidth="1.3" />
      <path d={`M${x + 21} ${y - 2.5}l8 2.5-8 2.5z`} fill="#f00" />
      <path d={`M${x} ${y}v22`} stroke="#000090" strokeWidth="1.3" />
      <path d={`M${x - 2.5} ${y + 21}l2.5 8 2.5-8z`} fill="#000080" />
      <circle cx={x} cy={y} r="2.5" fill="#12b312" />
      <text x={x + 34} y={y + 3} fill="#f00">X</text>
      <text x={x - 2.5} y={y + 39} fill="#000090">Z</text>
    </g>
  );
}

function ModelView() {
  const leftLine = LEVELS.map((l) => `${l.left},${l.y}`).join(' ');
  const rightLine = LEVELS.map((l) => `${l.right},${l.y}`).join(' ');

  return (
    <svg viewBox="230 77 809 493" preserveAspectRatio="xMinYMin meet" className="block w-full bg-[#fcfcfc] text-[8px]">
      <defs>
        <pattern id="snapGrid" x="239.5" y="81" width="27.05" height="27.05" patternUnits="userSpaceOnUse">
          <rect x="13" y="13" width="1" height="1" fill="#b4b4b4" />
        </pattern>
      </defs>
      <rect x="250" y="90" width="789" height="476" fill="url(#snapGrid)" />
      <path d="M230 256.500h809M766.500 77v493" stroke="#f3f3f3" />
      <path d="M230 527.500h809M496.500 77v16" stroke="#b4eef4" />

      <g fill="#8ee2ff">
        <rect x="491" y="95" width="11" height="432" />
        <rect x="707.5" y="93" width="11" height="434" />
        {LEVELS.map((l) => <rect key={l.y} x="496" y={l.y - l.h / 2} width="217" height={l.h} />)}
      </g>

      <g fill="none" stroke="#b97a9c">
        <polyline points={`${leftLine} 501.5,455`} />
        <polyline points={`${rightLine} 718,455`} />
        {LEVELS.map((l) => <path key={l.y} d={`M718 ${l.y}H${l.right}`} />)}
      </g>

      {LEVELS.map((l) => (
        <g key={l.y}>
          <circle cx="508.5" cy={l.y} r="5.8" fill={l.marks[0]} />
          <circle cx="700.5" cy={l.y} r="5.8" fill={l.marks[1]} />
          {l.hinge && (
            <>
              <circle cx="501" cy={l.y} r="2" fill="#fff" />
              <circle cx="708.5" cy={l.y} r="2" fill="#fff" />
            </>
          )}
          <rect x="494.5" y={l.y - 2} width="4" height="4" fill="#f00" />
          <rect x="711" y={l.y - 2} width="4" height="4" fill="#f00" />
          <rect x={l.right - 1.5} y={l.y - 1.5} width="3" height="3" fill="#85305c" />
          <g fill="#85305c">
            <text x={l.lx} y={l.y - 3}>{l.labels[0]}</text>
            <text x={l.mid} y={l.y + 10}>{l.labels[1]}</text>
            <text x={l.right + 1.5} y={l.y + 10}>{l.labels[2]}</text>
          </g>
        </g>
      ))}

      <path d="M494 531l2.500-4 2.500 4zM710.500 532l2.500-5 2.500 5z" fill="#1be01b" />
      <rect x="711" y="525.5" width="4" height="3" fill="#f00" />
      <Axes x={496.5} y={527} />
      <Axes x={273.5} y={513} />

      {/* view cube */}
      <g fill="#fff" stroke="#777" strokeWidth="1.3">
        {[[965.5, 12], [978, 24.5], [1003, 12]].map(([x, w]) =>
          [[101.5, 12], [114, 24.5], [139, 12]].map(([y, h]) => (
            <rect key={`${x}-${y}`} x={x} y={y} width={w} height={h} rx="1" />
          )),
        )}
      </g>
      <text x="984.5" y="131" fill="#0dbb1b" className="text-[10px] font-bold">-Y</text>

      {/* load factor gauge */}
      <path d="M989.500 179.500h5v108h-5zM987 179.500h13M987 286.500h13" fill="#fff" stroke="#aaa" />
      <rect x="989" y="189" width="6" height="98" fill="#808080" />
      <rect x="986" y="187" width="13" height="4" rx="2" fill="#808080" />
      <text x="1012" y="181">17.800</text>
      <text x="1012" y="193">17.100</text>
      <text x="1012" y="289">10.000</text>
    </svg>
  );
}

/* ---------- control panel ---------- */

const factors = [
  { title: 'Général', rows: [['Déformations', '1.69', true]] },
  { title: 'Par nœud', rows: [['Forces de réaction', '1.00'], ['Moments de réaction', '1.00'], ['Distribution des forces', '1.00'], ['Distribution des moments', '1.00']] },
  {
    title: 'Par barre',
    rows: [['Déformations', '1.00'], ['Efforts internes', '1.00'], ['Moments internes', '1.00'], ['Déformations', '1.00'], ['Articulations plastiques', '1.00', true], ['Distribution de charges', '1.00']],
  },
];

function ControlPanel() {
  return (
    <section className="absolute right-4 top-[222px] flex w-[218px] flex-col bg-white shadow-[0_1px_6px_rgba(0,0,0,0.45)]">
      <div className="flex h-[22px] items-center border-b-2 border-[#e0e0ea] pl-1.5 pr-0.5">
        <h2 className="flex-1 text-[#8c8c8c]">Panneau de contrôle</h2>
        <button aria-label="Fermer" className="flex size-[13px] items-center justify-center bg-[#dcdcdc]"><CloseMark className="text-[#e8e8e8]" /></button>
      </div>
      <div className="h-[30px] pl-2 pt-[3px] leading-[10px]">
        <p>Facteurs d'affichage</p>
        <p>Résultats</p>
      </div>
      <div className="flex h-[255px] flex-col bg-white">
        <table className="w-full table-fixed border-collapse">
          <colgroup>
            <col className="w-[14px]" />
            <col />
            <col className="w-[55px]" />
            <col className="w-[19px]" />
          </colgroup>
          {factors.map((group, g) => (
            <tbody key={group.title}>
              <tr className="h-[11px] bg-[#e2e2e2]">
                <td className="p-0">
                  <button aria-label="Réduire" className="ml-1 flex size-[7px] items-center justify-center border border-[#999] bg-white">
                    <span className="h-px w-[3px] bg-[#333]" />
                  </button>
                </td>
                <th colSpan={3} className="p-0 pl-[3px] text-left font-medium leading-[11px]">{group.title}</th>
              </tr>
              {group.rows.map(([name, value, flagged], i) => (
                <tr key={i} className="h-[12px]">
                  <td className="bg-[#e2e2e2] p-0" />
                  <td className="bg-[#fafaf5] p-0">
                    <div className="flex h-[12px] items-center leading-[12px]">
                      <span className={clsx('ml-2 mr-px w-2 self-start border-l border-[#d0d0d0]', i === group.rows.length - 1 ? 'h-[6px]' : 'h-[12px]')}>
                        <span className="block h-[6px] border-b border-[#d0d0d0]" />
                      </span>
                      {name}
                    </div>
                  </td>
                  <td className="border-x border-[#e6e6e6] p-0 pr-0.5 text-right leading-[12px]">{value}</td>
                  <td className="bg-[#fafaf5] p-0">{flagged && <Tri left className="ml-1 size-[7px] text-[#f00]" />}</td>
                </tr>
              ))}
              {g < factors.length - 1 && (
                <tr className="h-[11px]"><td className="bg-[#e2e2e2] p-0" /><td colSpan={3} className="p-0" /></tr>
              )}
            </tbody>
          ))}
        </table>
        <div className="w-[14px] flex-1 bg-[#e2e2e2]" />
      </div>
      <div className="flex h-[20px] bg-[#f7f7f7]">
        <button className="flex w-[28px] items-center justify-center bg-white" aria-label="Facteurs"><LuScale className="size-[12px] text-[#333]" /></button>
        <button className="mb-px flex w-[28px] items-center justify-center border border-[#d4d4e0] bg-[#eee]" aria-label="Filtre"><Icon name="memberPick" /></button>
        <span className="flex-1 border-t-2 border-[#e0e0ea]" />
      </div>
    </section>
  );
}

/* ---------- summary table ---------- */

const sums = [
  ['Somme des charges en X', '345.23', 'kN', ''],
  ["Somme des forces d'appui en X", '345.23', 'kN', 'Écart: 0.00 %'],
  ['Somme des charges en Y', '0.00', 'kN', ''],
  ["Somme des forces d'appui en Y", '0.00', 'kN', ''],
  ['Somme des charges en Z', '301.39', 'kN', ''],
  ["Somme des forces d'appui en Z", '301.39', 'kN', 'Écart: 0.00 %'],
];

const resultTabs = ['Résumé', 'Diagrammes de convergence', "Résultats de l'analyse pushover | Méthode N2 de l'EC8", 'Forces latérales normalisées'];

function Summary() {
  const [tab, setTab] = useState(0);

  return (
    <section className="flex flex-1 flex-col bg-[#f7f7f7]">
      <div className="mt-px flex h-[15px] items-center bg-[#d9e7f4] px-[5px]">
        <h2 className="flex-1 font-semibold text-[#222]">Résumé</h2>
        <button aria-label="Fermer"><CloseMark /></button>
      </div>
      <nav className="flex h-[15px] items-center gap-3 pl-1.5">
        {['Accéder à', 'Modifier', 'Sélection', 'Affichage', 'Paramètres'].map((m) => <button key={m}>{m}</button>)}
      </nav>
      <div className="flex h-[18px] items-center pl-[3px]">
        <Combo label="Analyse" value="Analyse pushover" icon="pushoverC" className="w-[111px]" />
        <Stepper dimRight />
        <Divider />
        <Combo label="Table" value="Aperçu" icon="overview" className="w-[177px]" />
        <Stepper dimLeft />
        <Divider />
        <Combo label="Combinaison" value="CO2" lead={<LoadSwatches />} className="w-[177px]" />
        <Stepper dimLeft dimRight />
        <Divider />
        <ToolGroup items="*selWin *gridOn" className="w-[38px]" />
        <span className="ml-auto h-3 w-px bg-[#c6c6c6]" />
        <span className="px-1 text-[#555]">»</span>
      </div>

      <div className="flex border-t-2 border-[#dcdce6]">
        <table className="w-full table-fixed border-collapse bg-[#fffdf3]">
          <colgroup>
            <col className="w-[44px]" />
            <col className="w-[253px]" />
            <col className="w-[58px]" />
            <col className="w-[58px]" />
            <col />
          </colgroup>
          <thead>
            <tr className="h-[7px] bg-[#e6e6e6]">
              {[0, 1, 2, 3, 4].map((i) => <td key={i} className="border-b border-r border-[#f4f4f4] p-0" />)}
            </tr>
            <tr className="h-[22px] bg-[#efefef] align-bottom">
              <td className="border-r border-[#d9d9d9] bg-[#dedede] p-0" />
              {['Description', 'Valeur', 'Unité', 'Remarques'].map((h) => (
                <th key={h} className="border-r border-[#d9d9d9] p-0 text-center font-medium leading-[12px]">{h}</th>
              ))}
            </tr>
          </thead>
          <tbody className="leading-[10px]">
            <tr className="h-[11px] border-t border-[#dadada] bg-[#e9e9e9]">
              <th colSpan={5} className="p-0 pl-[4px] text-left font-medium">Somme des charges et somme des forces d'appui</th>
            </tr>
            {sums.map(([name, value, unit, note], i) => (
              <tr key={name} className={clsx('border-t border-[#e4e4e4]', i % 3 === 2 ? 'h-[11px]' : 'h-[12px]', i % 2 ? 'bg-[#fffae8]' : 'bg-[#fffdf5]')}>
                <td className="bg-[#dedede] p-0" />
                <td className="border-r border-[#e0e0e0] p-0 pl-[3px]">{name}</td>
                <td className="border-r border-[#e0e0e0] p-0 pr-[3px] text-right">{value}</td>
                <td className="border-r border-[#e0e0e0] p-0 pl-[3px]">{unit}</td>
                <td className="p-0 pl-[3px]">{note}</td>
              </tr>
            ))}
          </tbody>
        </table>
        <div className="flex w-[13px] shrink-0 flex-col items-center justify-between bg-[#f3f3f3] py-1 text-[#333]">
          <Chevron className="rotate-180" />
          <span className="mb-auto mt-px h-[21px] w-[11px] bg-[#cdcdcd]" />
          <Chevron />
        </div>
      </div>

      <div className="flex min-h-[15px] flex-1 items-stretch">
        <div className="flex w-[95px] items-center justify-between px-1 text-[#444]">
          <button aria-label="Première" className="flex"><span className="h-1.5 w-px bg-[#777]" /><Tri left /></button>
          <button aria-label="Précédente"><Tri left /></button>
          <span className="px-2 text-black">1 sur 4</span>
          <button aria-label="Suivante"><Tri /></button>
          <button aria-label="Dernière" className="flex"><Tri /><span className="h-1.5 w-px bg-[#333]" /></button>
        </div>
        {resultTabs.map((name, i) => (
          <button
            key={name}
            onClick={() => setTab(i)}
            className={clsx('border-r border-[#d0d0da]', tab === i ? 'bg-white px-[7px]' : 'bg-[#ededed] px-[5px]')}
          >
            {name}
          </button>
        ))}
      </div>
    </section>
  );
}

/* ---------- window ---------- */

const menus = ['Fichier', 'Modifier', 'Affichage', 'Insérer', 'Assigner', 'Calculer', 'Résultats', 'Outils', 'Options', 'Fenêtre', 'CAO-BIM', 'Aide'];

export default function App() {
  return (
    <div className="flex min-h-screen flex-col overflow-hidden border-x border-b border-[#2f8fdc] bg-[#f7f7f7] font-['Open_Sans','Noto_Sans',sans-serif] text-[8px] leading-[12px] text-black">
      <header className="-mx-px flex h-[22px] items-center bg-[#0078d7] pl-1.5 pr-px text-white">
        <svg viewBox="0 0 12 12" className="mr-1.5 size-[11px]">
          <path d="M8 1C3 1 1 5 2 8s5 4 7 1-1-5-4-3" fill="none" stroke="#f3c623" strokeWidth="2" />
          <path d="M7 1l4-1-1 4zM1 2l3 1" fill="#222" stroke="#222" />
        </svg>
        <h1 className="flex-1">Dlubal RFEM | 6.04.0012 | Portique avec articulations élastiques FEMA.rf6</h1>
        <button aria-label="Réduire" className="w-[33px]"><span className="mx-auto block h-px w-2 bg-white" /></button>
        <button aria-label="Agrandir" className="w-[33px]"><span className="mx-auto block size-2 border border-white" /></button>
        <button aria-label="Fermer" className="flex w-[33px] justify-center"><svg viewBox="0 0 8 8" className="size-[8px]"><path d="M0 0l8 8M8 0L0 8" stroke="#fff" /></svg></button>
      </header>

      <nav className="flex h-[15px] items-center">
        <svg viewBox="0 0 12 8" className="mr-[5px] h-[8px] w-[12px]">
          <path d="M0 0h12v8H0z" fill="#1c2b6b" />
          <path d="M0 4h12M3 1v6M8 1v6" stroke="#c9cfe8" strokeWidth=".8" />
        </svg>
        <div className="flex w-[470px] justify-between">
          {menus.map((m) => <button key={m}>{m}</button>)}
        </div>
        <Tri className="ml-auto mr-0.5 text-[#999]" />
        <input
          type="search"
          aria-label="Recherche"
          placeholder="Entrez un mot-clé (Alt+Q)"
          className="h-[13px] w-[168px] bg-[#e8e8f3] px-[3px] outline-none placeholder:text-[#8a8a8a]"
        />
        <Icon name="magnifierList" className="ml-1 size-[12px]" />
        <span className="ml-[101px]">Dlubal Software SARL</span>
        <button aria-label="Réduire" className="ml-2 mt-1 h-px w-[5px] bg-[#222]" />
        <span className="ml-[7px] flex"><RestoreButton /></span>
        <button aria-label="Fermer" className="ml-1.5 mr-0.5"><CloseMark /></button>
      </nav>

      <div className="flex h-[20px] items-center">
        <Grip />
        <ToolGroup items="new open cloud cloudGear box save print v pageNew page | undo v redo v | *navPane *tablePane *panel console script calc" className="w-[355px]" />
        <Grip />
        <ToolGroup items="surfY v calcY" className="w-[46px]" />
        <Grip />
        <ToolGroup items="loadNew loadEdit" className="w-[38px]" />
        <Combo label="Combinaison" value="CO2" lead={<LoadSwatches />} className="flex-1" />
        <Stepper dimRight />
        <ToolGroup items="filterX v greenEye xxxGray *loadEye xxxLoad cubeEye *gridEye v *wedgeEye *wedgeXxx | wedgeWin abacus v" className="w-[236px]" />
        <Grip />
        <ToolGroup items="zoomX cube cubePen cubes | axes" className="w-[98px]" />
        <span className="w-[14px] text-center text-[#555]">»</span>
      </div>

      <div className="flex h-[20px] items-center overflow-hidden">
        <Grip />
        <ToolGroup items="node v line member v poly v | cone supports springs | surface v solid v opening v prism v blocks | grayCol v | pinLoad lineLoad surfLoad grayLoad nodeI v greenArrow v" className="w-[464px]" />
        <Grip />
        <ToolGroup items="filterWin | *frame film | moment plate cubeGray reaction wing | sec1 sec2 sec2 sec3 sec4 resWin pin | rainbow v" className="w-[328px]" />
        <Grip />
        <ToolGroup items="gridWin snap planeA planeB *planeC | dupl rot mirror cross camera" className="w-[193px]" />
      </div>

      <main className="flex flex-1">
        <Navigator />
        <div className="relative ml-0.5 flex min-w-0 flex-1 flex-col">
          <ModelView />
          <div className="absolute left-1 top-[4px] whitespace-pre leading-[12px]">
            <p>Mode de visibilité</p>
            <p>CO2</p>
            <p>Analyse pushover</p>
            <p>Incrément de charge n° 72 | Facteur : 17.100</p>
            <p>Déplacements |u| [mm]</p>
          </div>
          <p className="absolute left-1 top-[476px]">max |u| : 452.1 | min |u| : 0.0 mm</p>
          <Summary />
          <ControlPanel />
        </div>
      </main>

      <div className="flex h-[20px] items-center overflow-hidden border-t border-[#e0e0e6]">
        <Icon name="cs" className="ml-[3px] size-[13px]" />
        <Combo label="Système de coordonnées" value="1 - Global XYZ" lead={<span className="mr-[3px] size-2 bg-[#c8f8fc]" />} className="ml-0.5 w-[86px]" />
        <ToolGroup
          items="| viewA viewB viewC viewD viewE | secNew dimNew v xxNew towerNew boxNew | pathDots v renum v | colA colB rectD v lineD arcD parD trimD joinD gearD angleD | pentaD v"
          className="w-[469px]"
          iconClass="size-[13px]"
        />
        <span className="text-[#555]">»</span>
        <ToolGroup items="corner *gridOn gridNew *gridOn frameNew *frameEye" className="ml-auto w-[122px]" iconClass="size-[13px]" />
        <ToolGroup
          items="*snapGrid magnet sq circX sqX perp diag par tangent ring hatchA hatchB hatchC hatchC gridOff frameOff slab dash"
          className="ml-2 w-[312px]"
          iconClass="size-[12px]"
        />
      </div>

      <footer className="flex h-[11px] items-stretch whitespace-nowrap bg-[#e8e8f3] leading-[11px]">
        <span className="flex-1 pr-2 text-right">Mode de visibilité</span>
        <span className="w-[77px] border-l border-[#d4d4e0]" />
        <span className="w-[148px] border-l border-[#d4d4e0] pl-0.5">SC : Global XYZ</span>
        <span className="w-[48px] border-l border-[#d4d4e0] pl-[3px]">Plan : XZ</span>
        <span className="w-[55px] border-l border-[#d4d4e0]" />
        <span className="w-[55px] border-l border-[#d4d4e0]" />
        <span className="w-[68px] border-l border-[#d4d4e0]" />
      </footer>
    </div>
  );
}
